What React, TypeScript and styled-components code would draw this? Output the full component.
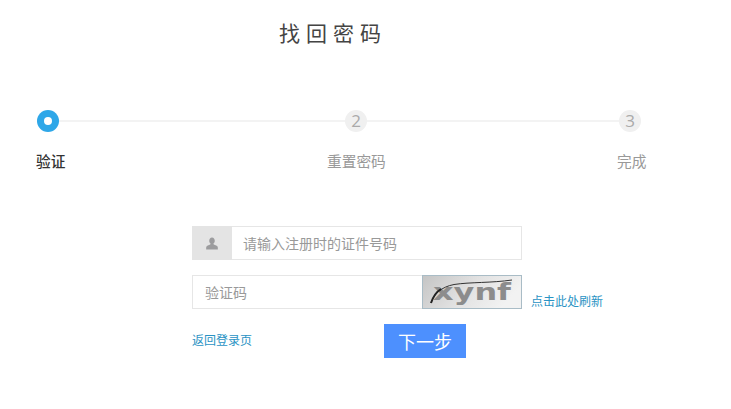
import React from "react";
import styled, { createGlobalStyle } from "styled-components";

const Global = createGlobalStyle`
  html, body { margin: 0; padding: 0; background: #fff; }
  body { font-family: "Noto Sans CJK SC", "Liberation Sans", sans-serif; }
  * { box-sizing: border-box; }
`;

const Page = styled.div`
  width: 731px;
  height: 409px;
  overflow: hidden;
`;

const Title = styled.h1`
  margin: 0;
  padding: 18px 0 0 279px;
  height: 110px;
  font-size: 21px;
  line-height: 28px;
  font-weight: 400;
  letter-spacing: 6px;
  color: #444;
`;

const Track = styled.div`
  display: flex;
  align-items: center;
  width: 604px;
  margin-left: 37px;
`;

const Node = styled.div<{ $active?: boolean }>`
  flex: none;
  width: 22px;
  height: 22px;
  border-radius: 50%;
  display: flex;
  align-items: center;
  justify-content: center;
  background: ${(p) => (p.$active ? "#2ea7e8" : "#f0f0f0")};
  color: #aaa;
  font-family: "Open Sans", sans-serif;
  font-size: 17px;
  line-height: 22px;
`;

const Dot = styled.span`
  width: 8px;
  height: 8px;
  border-radius: 50%;
  background: #fff;
`;

const Line = styled.div<{ $w: number }>`
  flex: none;
  width: ${(p) => p.$w}px;
  height: 2px;
  background: #f3f3f3;
`;

const Labels = styled.div`
  display: flex;
  margin: 18px 0 0 36px;
  height: 22px;
`;

const Label = styled.div<{ $active?: boolean; $w: number }>`
  flex: none;
  width: ${(p) => p.$w}px;
  font-size: 14.7px;
  line-height: 22px;
  font-weight: ${(p) => (p.$active ? 500 : 400)};
  white-space: nowrap;
  color: ${(p) => (p.$active ? "#333" : "#999")};
`;

const Form = styled.form`
  margin: 54px 0 0 192px;
  width: 420px;
`;

const IdField = styled.div`
  display: flex;
  width: 330px;
  height: 34px;
  border: 1px solid #e6e6e6;
`;

const AddOn = styled.div`
  flex: none;
  width: 40px;
  margin: -1px 0 -1px -1px;
  background: #e4e4e4;
  display: flex;
  align-items: center;
  justify-content: center;
`;

const Input = styled.input<{ $inset: number }>`
  flex: 1;
  min-width: 0;
  border: 0;
  outline: 0;
  padding: 0 0 0 ${(p) => p.$inset}px;
  background: transparent;
  font-family: inherit;
  font-size: 14px;
  color: #333;
  &::placeholder { color: #999; opacity: 1; }
`;

const CaptchaRow = styled.div`
  display: flex;
  align-items: flex-end;
  margin-top: 15px;
  height: 34px;
`;

const CaptchaField = styled.div`
  display: flex;
  flex: none;
  width: 230px;
  height: 34px;
  border: 1px solid #e6e6e6;
  border-right: 0;
`;

const CaptchaImage = styled.svg`
  flex: none;
  display: block;
  width: 100px;
  height: 34px;
`;

const Link = styled.a`
  color: #2a93c4;
  font-size: 12px;
  line-height: 16px;
  text-decoration: none;
  white-space: nowrap;
`;

const RefreshLink = styled(Link)`
  margin: 0 0 0 9px;
`;

const Actions = styled.div`
  display: flex;
  align-items: center;
  margin-top: 15px;
  height: 34px;
`;

const BackLink = styled(Link)`
  width: 192px;
  flex: none;
  margin-bottom: 2px;
`;

const Submit = styled.button`
  width: 82px;
  height: 34px;
  border: 0;
  padding: 0;
  background: #4d90fe;
  color: #fff;
  font-family: inherit;
  font-size: 18px;
  line-height: 34px;
`;

export default function App() {
  return (
    <Page>
      <Global />
      <Title>找回密码</Title>
      <Track>
        <Node $active><Dot /></Node>
        <Line $w={286} />
        <Node>2</Node>
        <Line $w={252} />
        <Node>3</Node>
      </Track>
      <Labels>
        <Label $active $w={291}>验证</Label>
        <Label $w={290}>重置密码</Label>
        <Label $w={40}>完成</Label>
      </Labels>
      <Form onSubmit={(e) => e.preventDefault()}>
        <IdField>
          <AddOn>
            <svg width="12" height="13" viewBox="0 0 13 14" aria-hidden="true">
              <path
                fill="#9c9c9e"
                d="M6.5 0.5C4.7 0.5 3.5 2 3.5 3.900c0 1.300.6 2.500 1.400 3.100.1.500 0 .9-.4 1.100L1.400 9.500C.6 9.900.2 10.500.2 11.300v2.200h12.600v-2.200c0-.8-.4-1.400-1.200-1.800L8.500 8.100c-.4-.2-.5-.6-.4-1.100.8-.6 1.400-1.800 1.400-3.100C9.500 2 8.300.5 6.500.5z"
              />
            </svg>
          </AddOn>
          <Input $inset={11} placeholder="请输入注册时的证件号码" />
        </IdField>
        <CaptchaRow>
          <CaptchaField>
            <Input $inset={12} placeholder="验证码" />
          </CaptchaField>
          <CaptchaImage viewBox="0 0 100 34" role="img" aria-label="验证码图片">
            <defs>
              <linearGradient id="cap" x1="0" y1="0" x2="1" y2="0.3">
                <stop offset="0" stopColor="#c4c4c4" />
                <stop offset="0.55" stopColor="#e2e2e2" />
                <stop offset="1" stopColor="#f2f2f2" />
              </linearGradient>
            </defs>
            <rect x="0.5" y="0.5" width="99" height="33" fill="url(#cap)" stroke="#a9bcc6" />
            <text
              x="11"
              y="25"
              fontFamily="'DejaVu Sans', sans-serif"
              fontWeight="700"
              fontSize="23"
              fill="#8c8c8c"
              textLength="78"
              lengthAdjust="spacingAndGlyphs"
            >
              xynf
            </text>
            <path
              d="M9 28C12 19 19 12 32 9.500C48 7 70 8 90 5"
              fill="none"
              stroke="#333"
              strokeWidth="1"
            />
            <path d="M9 28C11 22 14 17 19 14" fill="none" stroke="#222" strokeWidth="2" />
          </CaptchaImage>
          <RefreshLink href="#">点击此处刷新</RefreshLink>
        </CaptchaRow>
        <Actions>
          <BackLink href="#">返回登录页</BackLink>
          <Submit type="submit">下一步</Submit>
        </Actions>
      </Form>
    </Page>
  );
}
